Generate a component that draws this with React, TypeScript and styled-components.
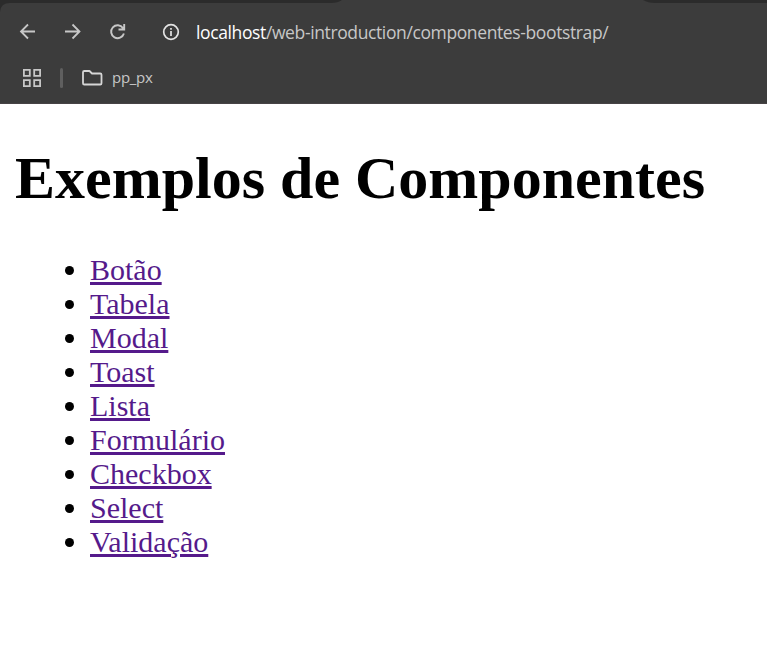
import React from "react";
import styled, { createGlobalStyle } from "styled-components";

const GlobalStyle = createGlobalStyle`
  html, body { margin: 0; background: #fff; }
  body { overflow: hidden; }
`;

const Window = styled.div`
  width: 767px;
  height: 660px;
  display: flex;
  flex-direction: column;
  background: #fff;
  overflow: hidden;
`;

const Chrome = styled.header`
  flex: none;
  height: 104px;
  box-sizing: border-box;
  background: #3c3c3c;
  border-bottom: 1px solid #474345;
  font-family: "Open Sans", "Noto Sans", sans-serif;
  display: flex;
  flex-direction: column;
`;

const TabStrip = styled.svg`
  display: block;
  flex: none;
  width: 767px;
  height: 12px;
`;

const Toolbar = styled.div`
  height: 40px;
  display: flex;
  align-items: center;
  padding-left: 19px;
`;

const NavButton = styled.a<{ $gap: number }>`
  display: block;
  width: 18px;
  height: 18px;
  margin-right: ${(p) => p.$gap}px;
  color: #c7c7c7;
  svg { display: block; }
`;

const Address = styled.div`
  padding-top: 1px;
  font-size: 17.5px;
  line-height: 25px;
  letter-spacing: -0.38px;
  white-space: nowrap;
  color: #c7c7c7;
`;

const Host = styled.span`
  color: #fff;
`;

const Bookmarks = styled.div`
  height: 51px;
  display: flex;
  align-items: center;
  padding-left: 23px;
`;

const Divider = styled.span`
  width: 3px;
  height: 20px;
  margin: 0 19px 0 19px;
  border-radius: 2px;
  background: #5f5f5f;
`;

const BookmarkLabel = styled.span`
  margin-left: 9px;
  padding-bottom: 2px;
  font-size: 15px;
  line-height: 20px;
  letter-spacing: -0.3px;
  color: #c7c7c7;
`;

const Page = styled.main`
  padding: 0 15px;
  font-family: "Liberation Serif", "Times New Roman", serif;
  color: #000;
`;

const Title = styled.h1`
  margin: 40px 0;
  font-size: 60px;
  line-height: 69px;
  font-weight: 700;
  white-space: nowrap;
`;

const List = styled.ul`
  margin: 0;
  padding-left: 75px;
  font-size: 30px;
  line-height: 34px;
`;

const Link = styled.a`
  color: #551a8b;
  text-decoration: underline;
`;

const items = [
  "Botão", "Tabela", "Modal", "Toast", "Lista",
  "Formulário", "Checkbox", "Select", "Validação",
];

export default function App() {
  return (
    <Window>
      <GlobalStyle />
      <Chrome>
        <TabStrip viewBox="0 0 767 12" fill="#2b2b2b">
          <path d="M0 0H342Q338 3 331 3H10Q0 3 0 13Z" />
          <path d="M643 0H767V3H655Q648 3 643 0Z" />
        </TabStrip>
        <Toolbar>
          <NavButton $gap={27}>
            <svg width="18" height="18" viewBox="0 0 18 18" fill="none" stroke="currentColor" strokeWidth="1.8">
              <path d="M16 8.5H2.5M9 1.5L2 8.5L9 15.5" />
            </svg>
          </NavButton>
          <NavButton $gap={27}>
            <svg width="18" height="18" viewBox="0 0 18 18" fill="none" stroke="currentColor" strokeWidth="1.8">
              <path d="M1 8.5H15M8.5 1.5L15.5 8.5L8.5 15.5" />
            </svg>
          </NavButton>
          <NavButton $gap={35}>
            <svg width="18" height="18" viewBox="0 0 18 18" fill="none" stroke="currentColor" strokeWidth="1.9">
              <path d="M14 5A6.5 6.5 0 1 0 14.9 10.5M15.2 1V6.5H9.5" />
              <path d="M12.2 6L14.8 3.4V6Z" fill="currentColor" stroke="none" />
            </svg>
          </NavButton>
          <NavButton $gap={16}>
            <svg width="18" height="18" viewBox="0 0 18 18" fill="none" stroke="#e3e3e3" strokeWidth="1.7">
              <circle cx="9" cy="9" r="7.3" />
              <path d="M9 8V13M9 5V6.7" />
            </svg>
          </NavButton>
          <Address><Host>localhost</Host>/web-introduction/componentes-bootstrap/</Address>
        </Toolbar>
        <Bookmarks>
          <svg width="18" height="18" viewBox="0 0 18 18" fill="none" stroke="#c7c7c7" strokeWidth="1.8">
            <path d="M.9 .9H6.8V6.8H.9ZM11.2 .9H17.1V6.8H11.2ZM.9 11.2H6.8V17.1H.9ZM11.2 11.2H17.1V17.1H11.2Z" />
          </svg>
          <Divider />
          <svg width="21" height="18" viewBox="0 0 21 18" fill="none" stroke="#d6d6d6" strokeWidth="1.8" strokeLinejoin="round">
            <path d="M2.3 2H7.5L10 4.5H18.2Q19.5 4.5 19.5 5.8V14.2Q19.5 15.5 18.2 15.5H2.3Q1 15.5 1 14.2V3.3Q1 2 2.3 2Z" />
          </svg>
          <BookmarkLabel>pp_px</BookmarkLabel>
        </Bookmarks>
      </Chrome>
      <Page>
        <Title>Exemplos de Componentes</Title>
        <List>
          {items.map((item) => (
            <li key={item}><Link href="#">{item}</Link></li>
          ))}
        </List>
      </Page>
    </Window>
  );
}
